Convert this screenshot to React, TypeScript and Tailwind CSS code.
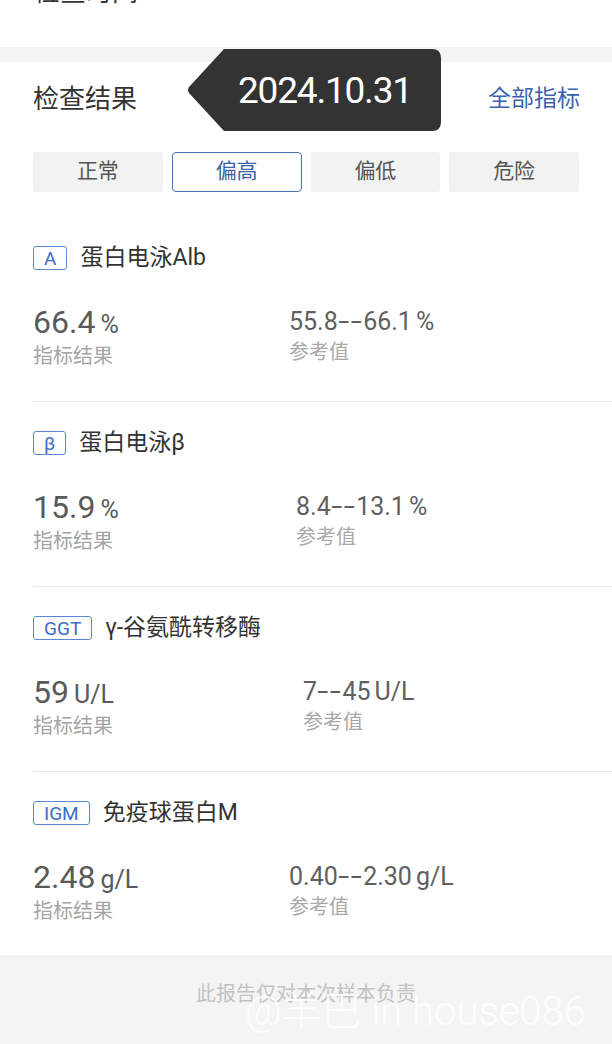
import React from 'react';

type Item = {
  badge: string;
  name: string;
  value: string;
  unit: string;
  range: string;
  refShift: string;
};

const items: Item[] = [
  { badge: 'A', name: '蛋白电泳Alb', value: '66.4', unit: '%', range: '55.8--66.1', refShift: 'ml-0' },
  { badge: 'β', name: '蛋白电泳β', value: '15.9', unit: '%', range: '8.4--13.1', refShift: 'ml-[7px]' },
  { badge: 'GGT', name: 'γ-谷氨酰转移酶', value: '59', unit: 'U/L', range: '7--45', refShift: 'ml-[14px]' },
  { badge: 'IGM', name: '免疫球蛋白M', value: '2.48', unit: 'g/L', range: '0.40--2.30', refShift: 'ml-0' },
];

const tabs = ['正常', '偏高', '偏低', '危险'];

const cjk = "font-['Roboto','Noto_Sans_CJK_SC',sans-serif]";

// 参考范围里的 "--" 比默认字体的连字符宽一些
const Range = ({ text }: { text: string }) => {
  const [lo, hi] = text.split('--');
  return (
    <span>
      {lo}
      <span className="mx-[5px] inline-block scale-x-[1.6] tracking-[0.8px]">--</span>
      {hi}
    </span>
  );
};

const ResultItem = ({ item, first, last }: { item: Item; first: boolean; last: boolean }) => (
  <div
    className={`ml-[33px] ${first ? 'pt-[54px]' : 'pt-[29px]'} ${
      last ? 'pb-[32px]' : 'pb-[33px] border-b border-[#e9e9e9]'
    }`}
  >
    {/* 标题 */}
    <div className="flex h-[24px] items-center gap-[13px]">
      <span className="flex h-[24px] items-center rounded-[3px] border-[1.5px] border-[#5b87cf] px-[10px] text-[19px] leading-none text-[#3b6cc4]">
        {item.badge}
      </span>
      <span className="text-[23px] leading-[24px] text-[#333333]">{item.name}</span>
    </div>

    {/* 数值 */}
    <div className="mt-[34px] flex">
      <div className="w-[256px] shrink-0">
        <div className="flex h-[36px] items-baseline text-[#5a5a5a]">
          <span className="text-[32px] leading-[36px]">{item.value}</span>
          <span className="ml-[5px] text-[25px] leading-[28px]">{item.unit}</span>
        </div>
        <div className="mt-[4px] text-[20px] leading-[24px] text-[#a4a4a4]">指标结果</div>
      </div>
      <div className={`${item.refShift} pt-[3px]`}>
        <div className="flex h-[30px] items-baseline text-[25px] leading-[30px] text-[#5f5f5f]">
          <Range text={item.range} />
          <span className="ml-[4px]">{item.unit}</span>
        </div>
        <div className="mt-[3px] text-[20px] leading-[24px] text-[#a8a8a8]">参考值</div>
      </div>
    </div>
  </div>
);

export default function App() {
  return (
    <div className={`relative flex min-h-[1044px] w-full flex-col overflow-hidden bg-white ${cjk}`}>
      {/* 上一段（被截断） */}
      <div className="flex h-[47px] flex-col overflow-hidden px-[34px]">
        <div className="mt-[-21px] text-[26px] leading-[26px] text-[#333333]">检查时间</div>
      </div>
      <div className="h-[15px] bg-[#f4f4f4]" />

      {/* 检查结果 */}
      <div className="flex h-[74px] items-center justify-between pl-[33px] pr-[32px]">
        <span className="text-[26px] text-[#333333]">检查结果</span>
        <span className="text-[23px] text-[#3a62ad]">全部指标</span>
      </div>

      {/* 筛选 */}
      <div className="mt-[16px] grid h-[40px] grid-cols-4 gap-[9px] px-[33px]">
        {tabs.map((t) =>
          t === '偏高' ? (
            <div
              key={t}
              className="flex items-center justify-center rounded-[4px] border-[1.5px] border-[#4a6fb5] bg-white text-[21px] text-[#3a5fa8]"
            >
              {t}
            </div>
          ) : (
            <div
              key={t}
              className="flex items-center justify-center rounded-[3px] bg-[#f2f2f2] text-[21px] text-[#555555]"
            >
              {t}
            </div>
          )
        )}
      </div>

      {items.map((item, i) => (
        <ResultItem key={item.badge} item={item} first={i === 0} last={i === items.length - 1} />
      ))}

      {/* 底部 */}
      <div className="relative min-h-[90px] flex-1 bg-[#f4f4f4] pt-[27px] text-center">
        <div className="text-[20px] leading-[24px] text-[#c2c2c2]">此报告仅对本次样本负责</div>
        <div className="absolute left-[245px] top-[37px] whitespace-nowrap text-[40px] font-light leading-none text-white/80">
          @羊巴 in house086
        </div>
      </div>

      {/* 日期提示 */}
      <div className="absolute left-[187px] top-[49px] h-[82px] w-[254px]">
        <svg width="254" height="82" viewBox="0 0 254 82" className="absolute inset-0">
          <path
            d="M37 0 H245 Q254 0 254 9 V73 Q254 82 245 82 H37 L2 44 Q0 41 2 38 Z"
            fill="#333333"
          />
        </svg>
        <div className="absolute left-[51px] top-[23px] font-['Roboto',sans-serif] text-[37px] leading-none tracking-[-1.2px] text-white">
          2024.10.31
        </div>
      </div>
    </div>
  );
}
